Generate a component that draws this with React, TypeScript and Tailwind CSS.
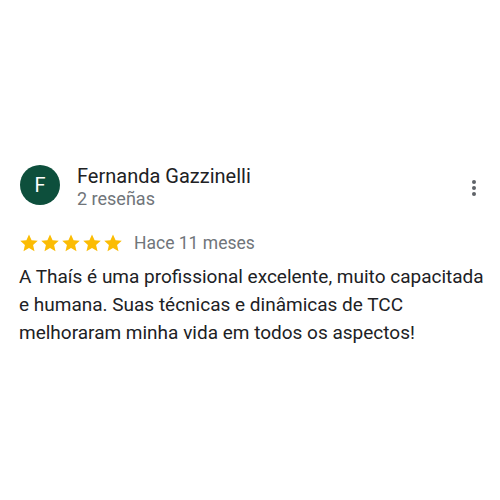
import React from "react";

const Star = () => (
  <svg width="20" height="20" viewBox="0 0 24 24" className="block">
    <path
      fill="#fbbc04"
      d="M12 1.8l3.1 6.9 7.4.7-5.6 5 1.7 7.4L12 18l-6.6 3.8 1.7-7.4-5.6-5 7.4-.7z"
    />
  </svg>
);

export default function App() {
  return (
    <div
      className="w-[500px] h-[500px] bg-white relative"
      style={{ fontFamily: "Roboto, 'Noto Sans', Arial, sans-serif" }}
    >
      <div className="pt-[165px] pl-[20px] pr-[8px]">
        <div className="flex items-start">
          <div className="w-[40px] h-[40px] rounded-full bg-[#0d4f3c] flex items-center justify-center text-white text-[20px] shrink-0">
            F
          </div>
          <div className="ml-[17px] flex-1 -mt-[1px]">
            <div className="text-[20px] leading-[24px] text-[#202124]">Fernanda Gazzinelli</div>
            <div className="text-[18px] leading-[22px] text-[#70757a]">2 reseñas</div>
          </div>
          <div className="mt-[15px] mr-[16px] flex flex-col gap-[2px] items-center">
            <span className="w-[4px] h-[4px] rounded-full bg-[#5f6368]" />
            <span className="w-[4px] h-[4px] rounded-full bg-[#5f6368]" />
            <span className="w-[4px] h-[4px] rounded-full bg-[#5f6368]" />
          </div>
        </div>
        <div className="flex items-center mt-[23px] -ml-[1px]">
          <div className="flex gap-[1px]">
            <Star />
            <Star />
            <Star />
            <Star />
            <Star />
          </div>
          <span className="ml-[11px] text-[17.5px] text-[#70757a] leading-[20px]">Hace 11 meses</span>
        </div>
        <p className="mt-[10px] -ml-[1px] text-[19px] leading-[28px] text-[#202124]">
          A Thaís é uma profissional excelente, muito capacitada e humana. Suas técnicas e dinâmicas de TCC melhoraram minha vida em todos os aspectos!
        </p>
      </div>
    </div>
  );
}
